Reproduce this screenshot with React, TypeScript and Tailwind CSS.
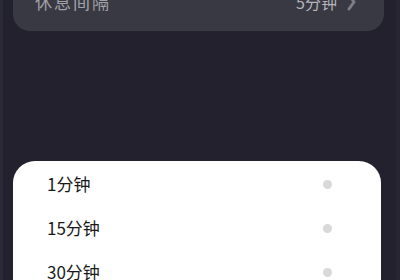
import React from "react";

export default function App() {
  const items = ["1分钟", "15分钟", "30分钟"];
  return (
    <div
      className="relative w-[400px] h-[280px] overflow-hidden bg-[#22212d] flex"
      style={{ fontFamily: '"Noto Sans CJK SC", "Noto Sans", sans-serif' }}
    >
      <div className="w-[3px] shrink-0 bg-[#2a2a37]" />
      <div className="flex-1 flex flex-col overflow-hidden">
        <div className="shrink-0 ml-[10px] mr-[12px] mt-[-30px] h-[61px] rounded-b-[17px] bg-[#393943] flex items-end pb-[18px] pl-[22px] pr-[28px]">
          <div className="flex-1 flex items-center justify-between">
            <span className="text-[17px] leading-[22px] text-[#a2a2a8] tracking-[2px]">休息间隔</span>
            <span className="flex items-center gap-[9px]">
              <span className="text-[16px] leading-[22px] text-[#b4b4ba]">5分钟</span>
              <svg width="10" height="18" viewBox="0 0 10 18">
                <path d="M3 2 L8 9 L3 16" fill="none" stroke="#7c7c84" strokeWidth="3" strokeLinecap="round" strokeLinejoin="round" />
              </svg>
            </span>
          </div>
        </div>
        <div className="shrink-0 ml-[10px] mr-[15px] mt-[130px] h-[140px] bg-white rounded-t-[22px] flex flex-col pt-[1px]">
          {items.map((t) => (
            <div key={t} className="shrink-0 h-[44px] flex items-center justify-between pl-[34px] pr-[49px]">
              <span className="text-[17px] leading-[22px] text-[#1a1a1a]">{t}</span>
              <span className="w-[9px] h-[9px] rounded-full bg-[#d9d9d9]" />
            </div>
          ))}
        </div>
      </div>
      <div className="w-[4px] shrink-0 bg-[#262532]" />
    </div>
  );
}
